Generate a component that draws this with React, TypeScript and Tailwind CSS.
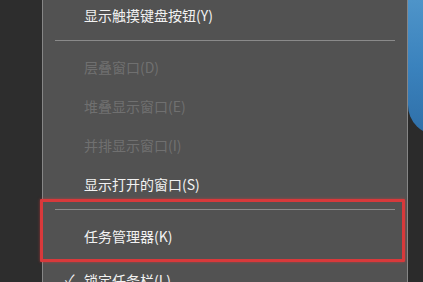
import React from "react";

const font = { fontFamily: '"Noto Sans CJK SC", "Microsoft YaHei", sans-serif' };

function Item({ label, disabled, check }: { label: string; disabled?: boolean; check?: boolean }) {
  return (
    <div className="h-[39px] flex items-center relative shrink-0">
      {check && (
        <span className="absolute left-[22px] text-[14px] text-[#f2f2f2]">✓</span>
      )}
      <span
        className={
          "pl-[41px] text-[14px] leading-none whitespace-nowrap " +
          (disabled ? "text-[#707070]" : "text-[#f2f2f2]")
        }
      >
        {label}
      </span>
    </div>
  );
}

function Sep() {
  return (
    <div className="h-[13px] flex items-center px-[12px] shrink-0">
      <div className="h-px w-full bg-[#8a8a8a]" />
    </div>
  );
}

export default function App() {
  return (
    <div className="w-[423px] h-[282px] overflow-hidden flex bg-[#2c2c2c] relative" style={font}>
      <div className="w-[42px] shrink-0 bg-[#2d2d2d]" />
      <div className="w-[366px] shrink-0 bg-[#525252] border-x border-[#868686] flex flex-col">
        <div className="mt-[-5px] flex flex-col">
          <Item label="显示触摸键盘按钮(Y)" />
          <Sep />
          <Item label="层叠窗口(D)" disabled />
          <Item label="堆叠显示窗口(E)" disabled />
          <Item label="并排显示窗口(I)" disabled />
          <Item label="显示打开的窗口(S)" />
          <Sep />
          <Item label="任务管理器(K)" />
          <div className="mt-[5px]">
            <Item label="锁定任务栏(L)" check />
          </div>
        </div>
      </div>
      <div className="flex-1 relative bg-[#2b2b2b]">
        <div className="absolute left-0 top-0 w-[40px] h-[135px] rounded-bl-[30px] bg-gradient-to-b from-[#4e94c9] via-[#3a82bd] to-[#2f6fa8]" />
      </div>
      <div className="absolute left-[40px] top-[199px] w-[365px] h-[63px] border-[3px] border-[#d8393b] rounded-[1px] shadow-[0_0_3px_rgba(230,60,60,0.6)]" />
    </div>
  );
}
